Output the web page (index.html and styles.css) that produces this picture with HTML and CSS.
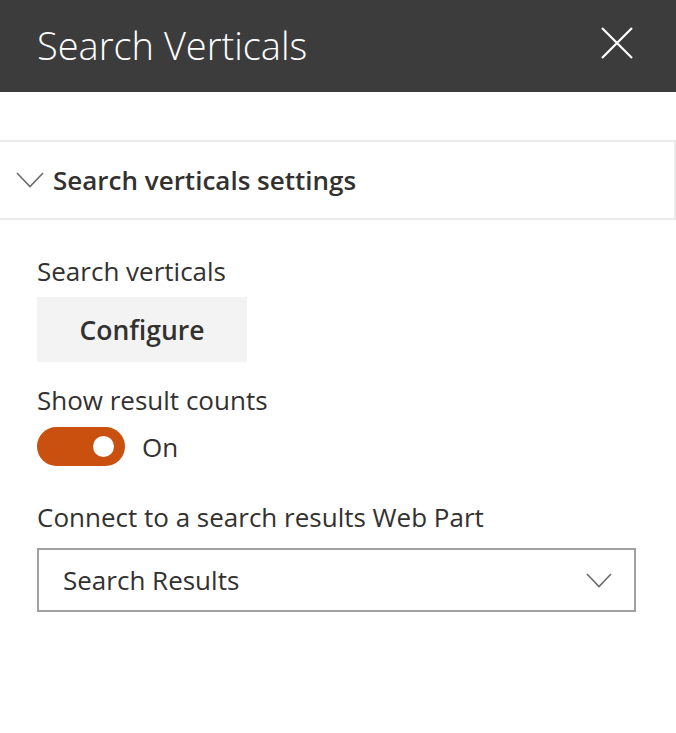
FILE: index.html
```html
<!DOCTYPE html>
<html>
<head>
<meta charset="utf-8">
<link rel="stylesheet" href="styles.css">
</head>
<body>
<div class="panel">
  <header class="header">
    <h1 class="title">Search Verticals</h1>
    <button class="close" aria-label="Close">
      <svg width="34" height="34" viewBox="0 0 34 34"><path d="M2 2 L32 32 M32 2 L2 32" stroke="#fff" stroke-width="2.2" fill="none"/></svg>
    </button>
  </header>
  <section class="group">
    <div class="group-head">
      <svg class="chev" width="28" height="16" viewBox="0 0 28 16"><path d="M1 1 L14 14.5 L27 1" stroke="#6b6b6b" stroke-width="1.6" fill="none"/></svg>
      <span class="group-title">Search verticals settings</span>
    </div>
  </section>
  <div class="body">
    <div class="field">
      <div class="label">Search verticals</div>
      <button class="btn">Configure</button>
    </div>
    <div class="field">
      <div class="label">Show result counts</div>
      <div class="toggle-row">
        <span class="toggle"><span class="knob"></span></span>
        <span class="toggle-text">On</span>
      </div>
    </div>
    <div class="field field-dd">
      <div class="label">Connect to a search results Web Part</div>
      <div class="dropdown">
        <span class="dd-text">Search Results</span>
        <svg width="26" height="15" viewBox="0 0 26 15"><path d="M1 1 L13 13.5 L25 1" stroke="#6b6b6b" stroke-width="1.6" fill="none"/></svg>
      </div>
    </div>
  </div>
</div>
</body>
</html>
```
FILE: styles.css
```css
* { box-sizing: border-box; }
html, body { margin: 0; padding: 0; background: #fff; }
body { font-family: "Open Sans", "Noto Sans", sans-serif; color: #323130; width: 676px; height: 733px; overflow: hidden; }
.header {
  height: 92px;
  background: #3c3c3c;
  display: flex;
  align-items: center;
  justify-content: space-between;
  padding: 0 42px 0 37px;
}
.title {
  margin: 0 0 3px;
  font-weight: 300;
  font-size: 38px;
  color: #fff;
}
.close { background: none; border: 0; padding: 0; display: flex; margin-top: -6px; }
.group {
  margin-top: 48px;
  border-top: 2px solid #ebebeb;
  border-bottom: 2px solid #ebebeb;
  border-right: 2px solid #ebebeb;
  height: 80px;
  display: flex;
  align-items: center;
  padding-left: 16px;
}
.group-head { display: flex; align-items: center; gap: 9px; }
.group-title { font-weight: 600; font-size: 26px; }
.body { padding: 34px 0 0 37px; }
.field { display: flex; flex-direction: column; align-items: flex-start; }
.label { font-size: 26px; line-height: 34px; }
.btn {
  margin-top: 9px;
  width: 210px;
  height: 65px;
  background: #f3f3f3;
  border: 0;
  font-family: inherit;
  font-weight: 600;
  font-size: 26.5px;
  color: #323130;
}
.field + .field { margin-top: 21px; }
.toggle-row { display: flex; align-items: center; margin-top: 10px; gap: 17px; }
.toggle {
  width: 88px;
  height: 39px;
  border-radius: 20px;
  background: #ca5010;
  display: flex;
  align-items: center;
  justify-content: flex-end;
  padding-right: 11px;
}
.knob { width: 21px; height: 21px; border-radius: 50%; background: #fff; }
.toggle-text { font-size: 26px; }
.field-dd { margin-top: 34px !important; }
.dropdown {
  margin-top: 14px;
  width: 599px;
  height: 64px;
  border: 2px solid #a0a0a0;
  display: flex;
  align-items: center;
  justify-content: space-between;
  padding: 0 22px 0 24px;
}
.dd-text { font-size: 26px; }
```
